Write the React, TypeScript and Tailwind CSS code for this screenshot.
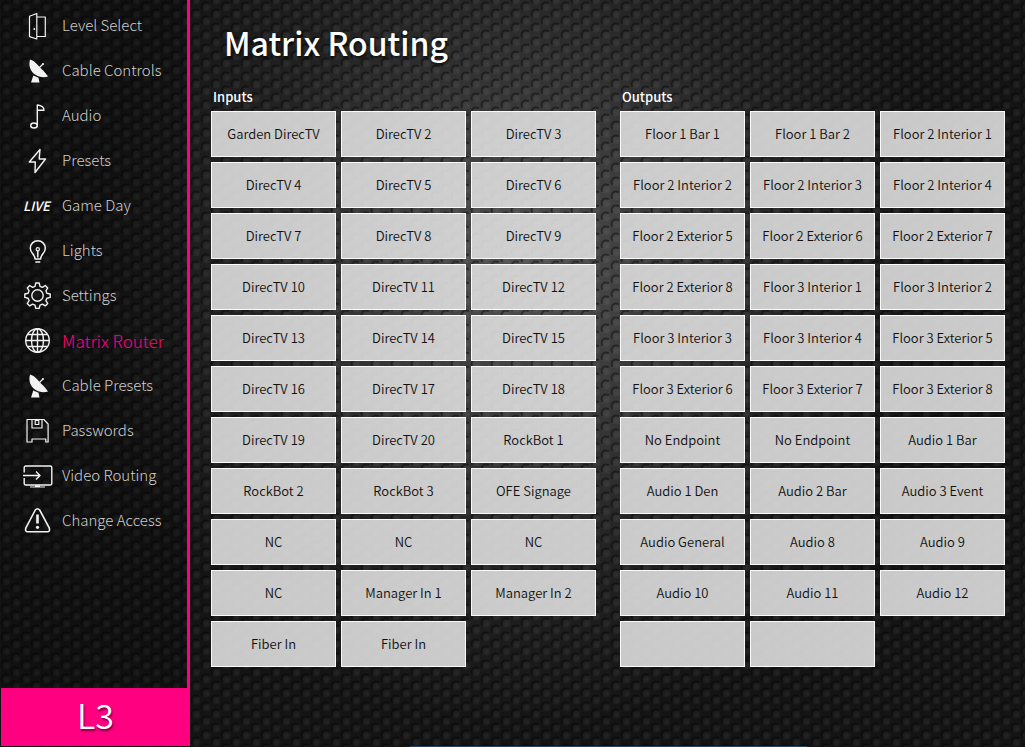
import type { ReactNode } from "react";

const inputs = [
  "Garden DirecTV", "DirecTV 2", "DirecTV 3", "DirecTV 4", "DirecTV 5", "DirecTV 6",
  "DirecTV 7", "DirecTV 8", "DirecTV 9", "DirecTV 10", "DirecTV 11", "DirecTV 12",
  "DirecTV 13", "DirecTV 14", "DirecTV 15", "DirecTV 16", "DirecTV 17", "DirecTV 18",
  "DirecTV 19", "DirecTV 20", "RockBot 1", "RockBot 2", "RockBot 3", "OFE Signage",
  "NC", "NC", "NC", "NC", "Manager In 1", "Manager In 2", "Fiber In", "Fiber In",
];

const outputs = [
  "Floor 1 Bar 1", "Floor 1 Bar 2", "Floor 2 Interior 1",
  "Floor 2 Interior 2", "Floor 2 Interior 3", "Floor 2 Interior 4",
  "Floor 2 Exterior 5", "Floor 2 Exterior 6", "Floor 2 Exterior 7",
  "Floor 2 Exterior 8", "Floor 3 Interior 1", "Floor 3 Interior 2",
  "Floor 3 Interior 3", "Floor 3 Interior 4", "Floor 3 Exterior 5",
  "Floor 3 Exterior 6", "Floor 3 Exterior 7", "Floor 3 Exterior 8",
  "No Endpoint", "No Endpoint", "Audio 1 Bar",
  "Audio 1 Den", "Audio 2 Bar", "Audio 3 Event",
  "Audio General", "Audio 8", "Audio 9",
  "Audio 10", "Audio 11", "Audio 12", "", "",
];

function Icon({ children }: { children: ReactNode }) {
  return (
    <svg aria-hidden="true" viewBox="0 1 30 30" className="h-[30px] w-[30px] shrink-0" fill="none" stroke="#f2f2f2" strokeWidth="1.4" strokeLinejoin="round">
      {children}
    </svg>
  );
}

const door = (
  <Icon>
    <path d="M6.500 6.200 13.800 3.500v25.500l-7.300-2.400zM14 7h8.300v19.500H14" strokeWidth="1.2" />
    <circle cx="11.300" cy="19" r=".9" fill="#f2f2f2" stroke="none" />
  </Icon>
);
const dish = (
  <Icon>
    <path d="M7 4.500C5.300 11 7.500 16.300 12 19.500 16 22.300 20.500 23 25 21.600 23.500 19 21 16.300 18.500 13.900 14.500 10.300 12.500 6 7 4.500z" fill="#f2f2f2" stroke="none" />
    <path d="M10.300 20.500 15.500 22.800 16.500 27.500H8z" fill="#f2f2f2" stroke="none" />
    <path d="m16.500 12.500 3.500-3.500" strokeWidth="1.200" />
    <circle cx="20" cy="9" r="1" fill="#f2f2f2" stroke="none" />
  </Icon>
);
const note = (
  <Icon>
    <ellipse cx="11" cy="25.500" rx="3.300" ry="2.500" />
    <path d="M14.300 25.500V5c2 .3 6.700.8 6.700 5.200h-6.700" />
  </Icon>
);
const bolt = (
  <Icon>
    <path d="M17 4.500 6.300 17h6L12 27.500 22.500 14h-6.300z" />
  </Icon>
);
const live = (
  <span aria-hidden="true" className="w-[30px] shrink-0 text-[13px] leading-5 font-medium text-white italic">LIVE</span>
);
const bulb = (
  <Icon>
    <path d="M12 24c0-5-4.700-5.500-4.700-10.800a7.500 7.500 0 0 1 15 0c0 5.300-4.600 5.800-4.600 10.800z" strokeWidth="1.500" />
    <path d="M12.300 27h5M14.800 22.500v-6.500" strokeWidth="1.500" />
    <circle cx="14.800" cy="14.300" r="1.600" strokeWidth="1.200" />
  </Icon>
);
const gear = (
  <Icon>
    <circle cx="14.500" cy="15.500" r="5.700" />
    <path d="M12.800 3h3.400l.8 3.300 2.400 1 2.900-1.800 2.400 2.400-1.800 2.900 1 2.400 3.300.8v3.400l-3.300.8-1 2.400 1.800 2.900-2.400 2.400-2.900-1.800-2.400 1-.8 3.300h-3.400l-.8-3.300-2.400-1-2.900 1.800-2.400-2.400 1.800-2.900-1-2.400-3.300-.8v-3.400l3.300-.8 1-2.400-1.800-2.900 2.400-2.400 2.900 1.800 2.400-1z" />
  </Icon>
);
const globe = (
  <Icon>
    <circle cx="14.500" cy="15.500" r="11.800" />
    <ellipse cx="14.500" cy="15.500" rx="6" ry="11.800" />
    <path d="M14.500 3.700v23.600M2.700 15.500h23.600M4.500 9.500h20M4.500 21.500h20" />
  </Icon>
);
const disk = (
  <Icon>
    <path d="M4 4.500h16.800l4.300 4.500v18h-2.300v-3H9v3H4z" strokeWidth="1.200" />
    <path d="M9 4.500V13h10V4.500M12.200 5.500h3.600v4h-3.600z" strokeWidth="1.200" />
  </Icon>
);
const screen = (
  <Icon>
    <path d="M1.200 12.500V7.500A1.500 1.500 0 0 1 2.700 6h24.600a1.500 1.500 0 0 1 1.500 1.500v16a1.500 1.500 0 0 1-1.500 1.500H2.700a1.500 1.500 0 0 1-1.500-1.500V18M0 15.500h17M13 11.500l4 4-4 4" />
    <path d="M7 27h15M12 25.800h5" strokeWidth="1.200" />
  </Icon>
);
const warning = (
  <Icon>
    <path d="M12.300 5q2.200-2.600 4.400 0L26.200 22.800q1.200 4-2 4H4.900q-3.200 0-2-4z" strokeWidth="1.600" />
    <path d="M14.500 9.500v9" strokeWidth="2.600" />
    <circle cx="14.500" cy="22.300" r="1.600" fill="#f2f2f2" stroke="none" />
  </Icon>
);

const menu: { label: string; icon: ReactNode; active?: boolean }[] = [
  { label: "Level Select", icon: door },
  { label: "Cable Controls", icon: dish },
  { label: "Audio", icon: note },
  { label: "Presets", icon: bolt },
  { label: "Game Day", icon: live },
  { label: "Lights", icon: bulb },
  { label: "Settings", icon: gear },
  { label: "Matrix Router", icon: globe, active: true },
  { label: "Cable Presets", icon: dish },
  { label: "Passwords", icon: disk },
  { label: "Video Routing", icon: screen },
  { label: "Change Access", icon: warning },
];

function Backdrop() {
  return (
    <svg aria-hidden="true" className="absolute inset-0 -z-10 h-full w-full">
      <defs>
        <radialGradient id="knob" cx="60%" cy="60%" r="60%">
          <stop offset="0" stopColor="#fff" stopOpacity=".07" />
          <stop offset="1" stopColor="#fff" stopOpacity=".01" />
        </radialGradient>
        <pattern id="studs" width="20" height="14" patternUnits="userSpaceOnUse">
          <g fill="none" stroke="#000" strokeOpacity=".42" strokeWidth="2" strokeLinecap="round">
            <path d="M2 9C.5 4.500 4 1.500 8 3M12 16c-1.500-4.500 2-7.500 6-6M12 2c-1.500-4.500 2-7.500 6-6" />
          </g>
          <circle cx="6" cy="7" r="4.500" fill="url(#knob)" />
          <circle cx="16" cy="14" r="4.500" fill="url(#knob)" />
          <circle cx="16" cy="0" r="4.500" fill="url(#knob)" />
        </pattern>
        <radialGradient id="light" cx="51%" cy="36%" r="62%" gradientTransform="translate(.16 0) scale(.68 1)">
          <stop offset="0" stopColor="#525252" />
          <stop offset=".3" stopColor="#3c3c3c" />
          <stop offset=".65" stopColor="#222" />
          <stop offset="1" stopColor="#141414" />
        </radialGradient>
      </defs>
      <rect width="100%" height="100%" fill="url(#light)" />
      <rect width="100%" height="100%" fill="url(#studs)" />
    </svg>
  );
}

function RoutePanel({ title, items }: { title: string; items: string[] }) {
  return (
    <section className="min-w-0 flex-1">
      <h2 className="mb-1 pl-0.5 text-[13px] leading-5 font-medium">{title}</h2>
      <div className="grid grid-cols-3 gap-[5px]">
        {items.map((name, index) => (
          <button
            key={index}
            type="button"
            aria-label={name || `${title} ${index + 1}`}
            className="h-[46px] border border-white/90 bg-[#dedede]/90 text-[13px] font-[350] whitespace-nowrap text-[#111]"
          >
            {name}
          </button>
        ))}
      </div>
    </section>
  );
}

export default function App() {
  return (
    <div className="relative isolate flex min-h-screen bg-[#151515] font-['Noto_Sans_CJK_SC',sans-serif] text-white">
      <Backdrop />
      <aside className="flex w-[190px] shrink-0 flex-col pb-px pl-px">
        <nav className="flex-1 border-r-[3px] border-[#ff0080] bg-black/20 pt-[3px]">
          {menu.map(({ label, icon, active }) => (
            <a
              key={label}
              href="#"
              aria-current={active ? "page" : undefined}
              className={
                active
                  ? "flex h-[45px] items-center gap-[9px] pl-[22px] text-[17px] font-light whitespace-nowrap text-[#ff0080]"
                  : "flex h-[45px] items-center gap-[9px] pl-[22px] text-[15px] font-light whitespace-nowrap text-[#cfcfcf]"
              }
            >
              {icon}
              <span>{label}</span>
            </a>
          ))}
        </nav>
        <button type="button" className="h-[58px] bg-[#ff0080] pb-1 text-[34px] leading-none font-[350] text-shadow-[1px_2px_2px_rgb(0_0_0/0.5)]">
          L3
        </button>
      </aside>
      <main className="flex min-w-0 flex-1 flex-col pt-[17px] pr-5 pl-[21px]">
        <h1 className="pl-[13px] text-[32px] leading-[50px] font-medium text-shadow-[1px_2px_3px_rgb(0_0_0/0.8)]">Matrix Routing</h1>
        <div className="mt-5 mb-6 flex gap-6">
          <RoutePanel title="Inputs" items={inputs} />
          <RoutePanel title="Outputs" items={outputs} />
        </div>
        <div className="mx-auto mt-auto h-px w-1/2 bg-[#1c4263]" />
      </main>
    </div>
  );
}
